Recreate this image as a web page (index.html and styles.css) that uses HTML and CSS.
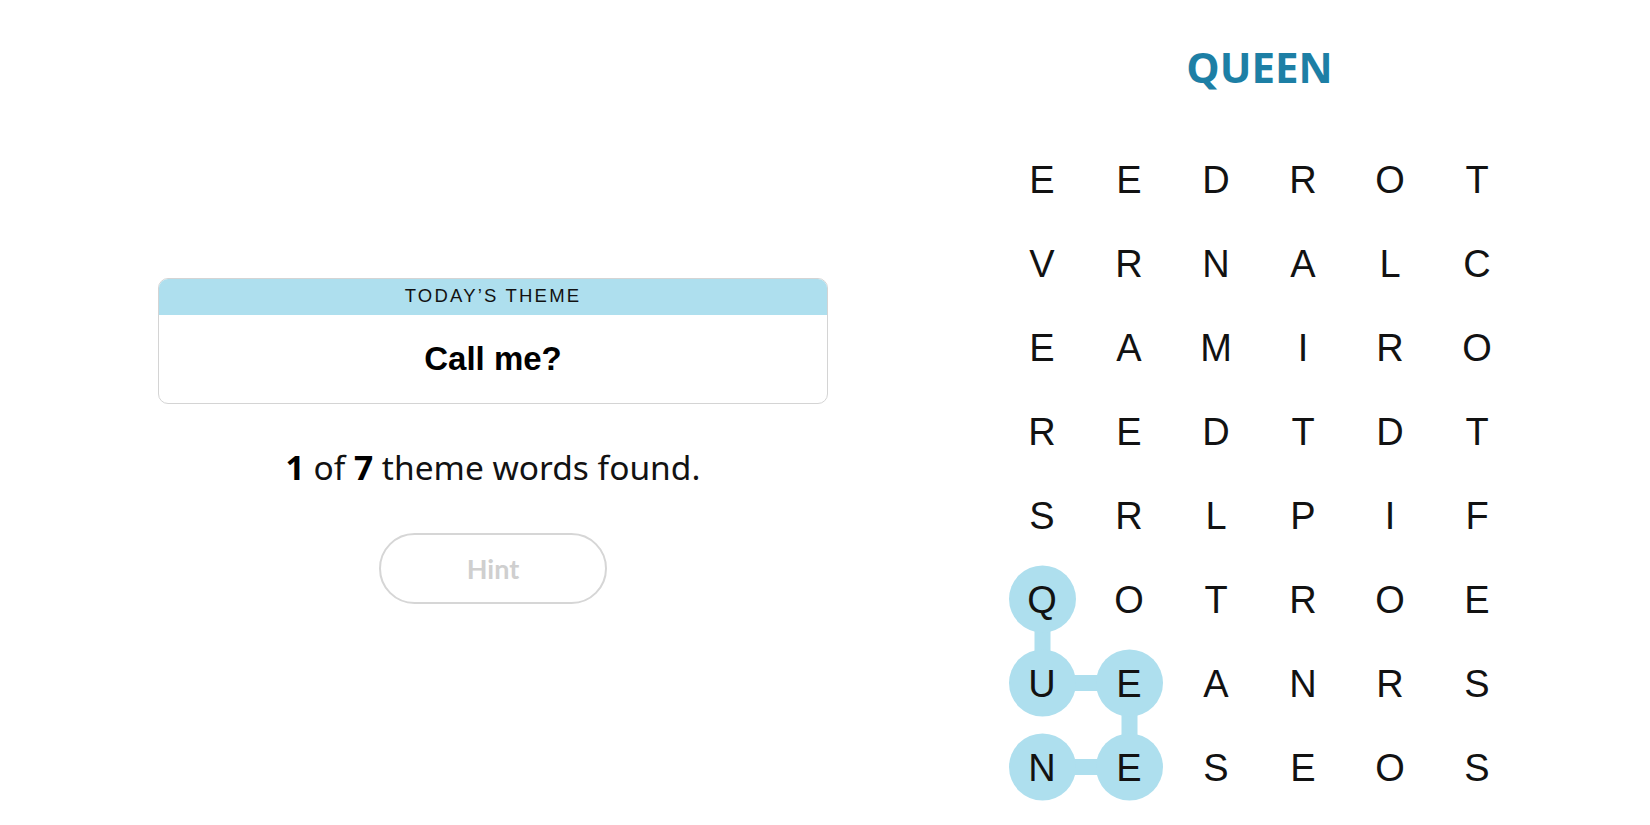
FILE: index.html
```html
<!DOCTYPE html>
<html lang="en">
<head>
<meta charset="utf-8">
<title>Strands</title>
<link rel="stylesheet" href="styles.css">
</head>
<body>
<main class="page">
  <section class="left">
    <div class="theme-card">
      <div class="theme-head">TODAY’S THEME</div>
      <div class="theme-body">Call me?</div>
    </div>
    <p class="progress"><b>1</b> of <b>7</b> theme words found.</p>
    <button class="hint" type="button">Hint</button>
  </section>
  <section class="right">
    <h1 class="word">QUEEN</h1>
    <div class="board">
      <svg class="trail" width="522" height="672" viewBox="0 0 522 672" aria-hidden="true">
        <g stroke="#aedfee" stroke-width="16" fill="none" stroke-linecap="butt">
          <path d="M43.5 462 L43.5 546 L130.5 546 L130.5 630 L43.5 630"/>
        </g>
        <g fill="#aedfee">
          <circle cx="43.5" cy="462" r="33.5"/>
          <circle cx="43.5" cy="546" r="33.5"/>
          <circle cx="130.5" cy="546" r="33.5"/>
          <circle cx="43.5" cy="630" r="33.5"/>
          <circle cx="130.5" cy="630" r="33.5"/>
        </g>
      </svg>
      <div class="grid">
        <span>E</span><span>E</span><span>D</span><span>R</span><span>O</span><span>T</span>
        <span>V</span><span>R</span><span>N</span><span>A</span><span>L</span><span>C</span>
        <span>E</span><span>A</span><span>M</span><span>I</span><span>R</span><span>O</span>
        <span>R</span><span>E</span><span>D</span><span>T</span><span>D</span><span>T</span>
        <span>S</span><span>R</span><span>L</span><span>P</span><span>I</span><span>F</span>
        <span>Q</span><span>O</span><span>T</span><span>R</span><span>O</span><span>E</span>
        <span>U</span><span>E</span><span>A</span><span>N</span><span>R</span><span>S</span>
        <span>N</span><span>E</span><span>S</span><span>E</span><span>O</span><span>S</span>
      </div>
    </div>
  </section>
</main>
</body>
</html>
```
FILE: styles.css
```css
html, body {
  margin: 0;
  padding: 0;
  background: #ffffff;
}

body {
  font-family: "Liberation Sans", Arial, sans-serif;
  color: #121212;
  width: 1650px;
  height: 825px;
  overflow: hidden;
}

.page {
  display: flex;
  align-items: flex-start;
  height: 825px;
}

.left {
  width: 670px;
  margin-left: 158px;
  padding-top: 278px;
  display: flex;
  flex-direction: column;
  align-items: center;
}

.theme-card {
  width: 670px;
  box-sizing: border-box;
  border: 1.5px solid #d4d4d4;
  border-radius: 10px;
  overflow: hidden;
}

.theme-head {
  height: 37px;
  background: #aedfee;
  display: flex;
  align-items: center;
  justify-content: center;
  font-size: 18.5px;
  letter-spacing: 2.2px;
  color: #121212;
  margin: -1.5px -1.5px 0;
  border-radius: 10px 10px 0 0;
}

.theme-body {
  height: 88px;
  display: flex;
  align-items: center;
  justify-content: center;
  font-size: 33px;
  font-weight: 700;
  color: #000;
}

.progress {
  margin: 43px 0 0;
  font-family: "Noto Sans", sans-serif;
  font-size: 33.5px;
  line-height: 40px;
  color: #121212;
}

.progress b {
  font-weight: 700;
  color: #000;
}

.hint {
  margin-top: 46px;
  width: 228px;
  height: 71px;
  box-sizing: border-box;
  border: 2px solid #d6d6d6;
  border-radius: 36px;
  background: #fff;
  font-family: Lato, sans-serif;
  font-weight: 700;
  font-size: 27px;
  color: #cfcfcf;
  padding: 0;
}

.right {
  margin-left: 170.5px;
  width: 522px;
  display: flex;
  flex-direction: column;
  align-items: center;
  padding-top: 39px;
}

.word {
  margin: 0;
  font-family: "Open Sans", sans-serif;
  font-weight: 700;
  font-size: 42px;
  line-height: 56px;
  color: #1d7fa5;
  letter-spacing: 0;
}

.board {
  position: relative;
  margin-top: 42px;
  width: 522px;
  height: 672px;
}

.trail {
  position: absolute;
  left: 0;
  top: 0;
}

.grid {
  position: relative;
  display: grid;
  grid-template-columns: repeat(6, 87px);
  grid-template-rows: repeat(8, 84px);
}

.grid span {
  display: flex;
  align-items: center;
  justify-content: center;
  font-size: 38px;
  line-height: 1;
  color: #121212;
  padding-top: 2px;
}
```
